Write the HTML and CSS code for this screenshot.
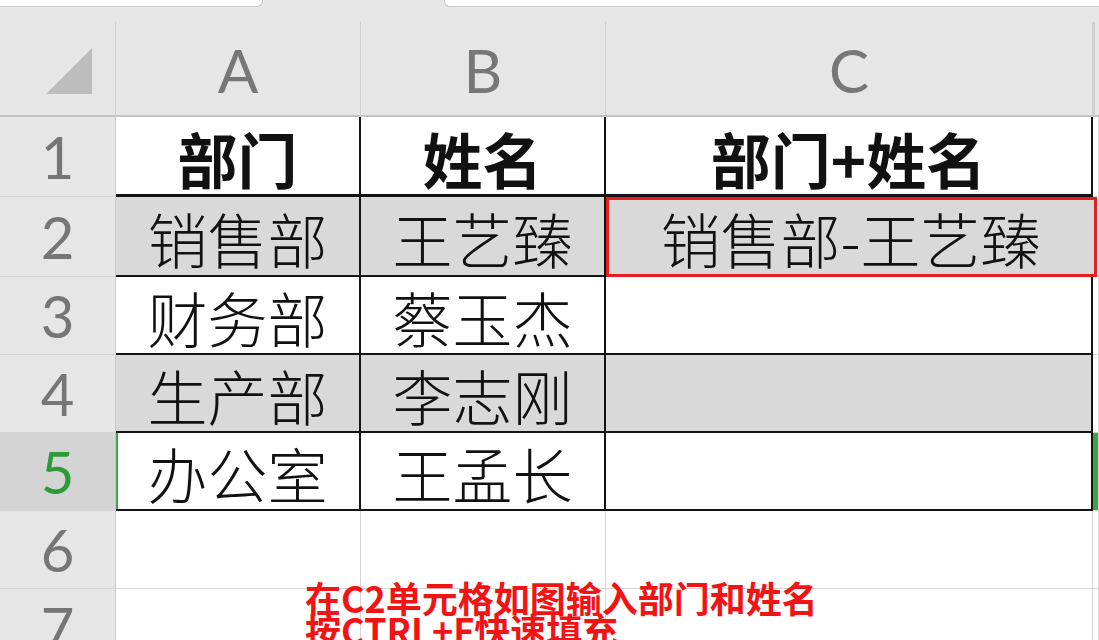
FILE: index.html
```html
<!DOCTYPE html>
<html lang="zh-CN">
<head>
    <meta charset="UTF-8">
    <title>部门+姓名</title>
    <link rel="stylesheet" href="styles.css">
</head>
<body>
    <div class="tabbar">
        <div class="tab tab-left"></div>
        <div class="tab tab-right"></div>
    </div>
    <div class="sheet">
        <!-- column headers -->
        <div class="corner">
            <svg width="48" height="48" viewBox="0 0 48 48"><polygon points="1,47 47,47 47,1" fill="#bdbdbd"/></svg>
        </div>
        <div class="colhead">A</div>
        <div class="colhead">B</div>
        <div class="colhead">C</div>
        <div class="colhead col-d"></div>

        <!-- row 1 -->
        <div class="rowhead">1</div>
        <div class="cell tbl title">部门</div>
        <div class="cell tbl title">姓名</div>
        <div class="cell tbl title">部门+姓名</div>
        <div class="cell"></div>

        <!-- row 2 -->
        <div class="rowhead">2</div>
        <div class="cell tbl shade">销售部</div>
        <div class="cell tbl shade">王艺臻</div>
        <div class="cell tbl shade marked">销售部-王艺臻</div>
        <div class="cell"></div>

        <!-- row 3 -->
        <div class="rowhead">3</div>
        <div class="cell tbl">财务部</div>
        <div class="cell tbl">蔡玉杰</div>
        <div class="cell tbl"></div>
        <div class="cell"></div>

        <!-- row 4 -->
        <div class="rowhead">4</div>
        <div class="cell tbl shade">生产部</div>
        <div class="cell tbl shade">李志刚</div>
        <div class="cell tbl shade"></div>
        <div class="cell"></div>

        <!-- row 5 (selected) -->
        <div class="rowhead active">5</div>
        <div class="cell tbl sel-start">办公室</div>
        <div class="cell tbl">王孟长</div>
        <div class="cell tbl"></div>
        <div class="cell sel-end"></div>

        <!-- row 6 -->
        <div class="rowhead">6</div>
        <div class="cell"></div>
        <div class="cell"></div>
        <div class="cell"></div>
        <div class="cell"></div>

        <!-- row 7 -->
        <div class="rowhead">7</div>
        <div class="cell"></div>
        <div class="cell"></div>
        <div class="cell"></div>
        <div class="cell"></div>
    </div>

    <div class="note">在C2单元格如图输入部门和姓名<br>按CTRL+F快速填充</div>
</body>
</html>
```

FILE: styles.css
```css
html, body { margin: 0; height: 640px; overflow: hidden; }
body { background: #e6e6e6; font-family: "Noto Sans CJK SC", sans-serif; position: relative; }

.tabbar { height: 22px; display: flex; justify-content: space-between; }
.tab { height: 6px; background: #fff; border-bottom: 1px solid #c9c9c9; }
.tab-left { width: 262px; border-right: 1px solid #c9c9c9; border-bottom-right-radius: 6px; }
.tab-right { width: 654px; border-left: 1px solid #c9c9c9; border-bottom-left-radius: 6px; }

.sheet { display: grid; grid-template-columns: 116px 245px 245px 487px 1fr; grid-template-rows: 95px 80px 80px 78px 78px 78px 78px 78px; }

.corner { background: #e6e6e6; border-right: 1px solid #d0d0d0; border-bottom: 2px solid #c4c4c4; display: flex; align-items: flex-end; justify-content: flex-end; padding: 0 22px 20px 0; }
.colhead { background: #e6e6e6; border-right: 1px solid #d0d0d0; border-bottom: 2px solid #c4c4c4; color: #777; font-family: Lato, "Open Sans", sans-serif; font-size: 60px; line-height: 1; display: flex; align-items: center; justify-content: center; padding-top: 2px; }
.col-d { border-right: none; box-shadow: inset 2px 0 0 #cfcfcf; }

.rowhead { background: #e6e6e6; border-right: 1px solid #c9c9c9; border-bottom: 1px solid #d4d4d4; color: #767676; font-family: Lato, "Open Sans", sans-serif; font-size: 58px; line-height: 1; display: flex; align-items: center; justify-content: center; }
.rowhead.active { background: #d4d4d4; color: #2e9b3b; }

.cell { background: #fff; border-right: 1px solid #d6d6d6; border-bottom: 1px solid #d6d6d6; display: flex; align-items: center; justify-content: center; font-size: 60px; line-height: 1; font-weight: 300; color: #111; padding-top: 4px; box-sizing: border-box; white-space: nowrap; }
.cell.tbl { border-right: 2px solid #141414; border-bottom: 2px solid #141414; }
.cell.title { font-weight: 700; border-bottom-width: 3px; }
.cell.shade { background: #d9d9d9; }
.cell.marked { outline: 3px solid #e61e1e; outline-offset: -3px; margin-right: -4px; position: relative; }
.cell.sel-start { box-shadow: inset 2px 0 0 #3aa545; }
.cell.sel-end { box-shadow: inset 6px 0 0 #3aa545; }

.note { position: absolute; left: 305px; top: 581px; color: #f21414; font-weight: 700; font-size: 36px; letter-spacing: 0; line-height: 32px; }
```
